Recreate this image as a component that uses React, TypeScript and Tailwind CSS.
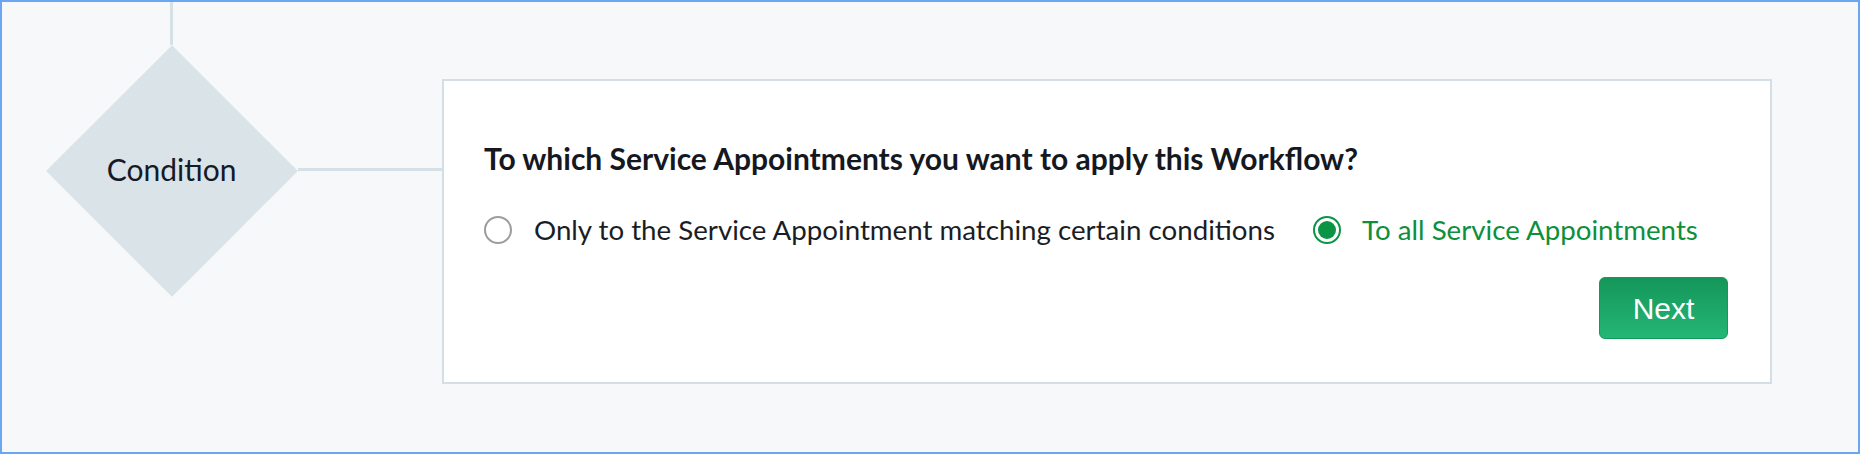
import React, { useState } from 'react';

const lato = { fontFamily: 'Lato, "Open Sans", sans-serif' };

function Radio({ checked }: { checked: boolean }) {
  return checked ? (
    <span className="flex h-[28px] w-[28px] shrink-0 items-center justify-center rounded-full border-2 border-[#0b9444] bg-white">
      <span className="h-[18px] w-[18px] rounded-full bg-[#0b9444]" />
    </span>
  ) : (
    <span className="h-[28px] w-[28px] shrink-0 rounded-full border-2 border-[#9d9d9d] bg-white" />
  );
}

export default function App() {
  const [all, setAll] = useState(true);

  return (
    <div
      className="flex h-[454px] w-[1860px] items-start overflow-hidden border-2 border-[#6ba6f2] bg-[#f6f8fa] pl-[43px]"
      style={lato}
    >
      {/* condition node */}
      <div className="flex w-[253px] flex-col items-center">
        <div className="h-[43px] w-[3px] bg-[#d6e1e7]" />
        <div className="flex h-[252px] w-[252px] items-center justify-center">
          <div className="flex h-[178px] w-[178px] rotate-45 items-center justify-center bg-[#d9e3e8]">
            <div className="-rotate-45">
              <span className="block pb-[5px] text-[30px] leading-[36px] text-[#151a27]">Condition</span>
            </div>
          </div>
        </div>
      </div>

      {/* connector */}
      <div className="mt-[166px] h-[3px] w-[144px] bg-[#d6e1e7]" />

      {/* card */}
      <div className="mt-[77px] flex h-[305px] w-[1330px] flex-col border-2 border-[#d3dee5] bg-white pl-[40px] pr-[42px] pt-[60px]">
        <h2 className="whitespace-nowrap text-[30px] font-bold leading-[34px] text-[#16181f]">
          To which Service Appointments you want to apply this Workflow?
        </h2>

        <div className="mt-[40px] flex h-[30px] items-center">
          <button type="button" className="flex items-center gap-[22px]" onClick={() => setAll(false)}>
            <Radio checked={!all} />
            <span className={`text-[27.7px] ${!all ? 'text-[#0e8f3c]' : 'text-[#1b1d24]'}`}>
              Only to the Service Appointment matching certain conditions
            </span>
          </button>
          <button type="button" className="ml-[38px] flex items-center gap-[21px]" onClick={() => setAll(true)}>
            <Radio checked={all} />
            <span className={`text-[27.7px] ${all ? 'text-[#0e8f3c]' : 'text-[#1b1d24]'}`}>
              To all Service Appointments
            </span>
          </button>
        </div>

        <div className="mt-[32px] flex justify-end">
          <button
            type="button"
            className="flex h-[62px] w-[129px] items-center justify-center rounded-[6px] border border-[#139a58] bg-gradient-to-b from-[#14965a] to-[#24b676] text-[30px] text-white"
            style={{ fontFamily: '"Liberation Sans", Arial, sans-serif' }}
          >
            Next
          </button>
        </div>
      </div>
    </div>
  );
}
